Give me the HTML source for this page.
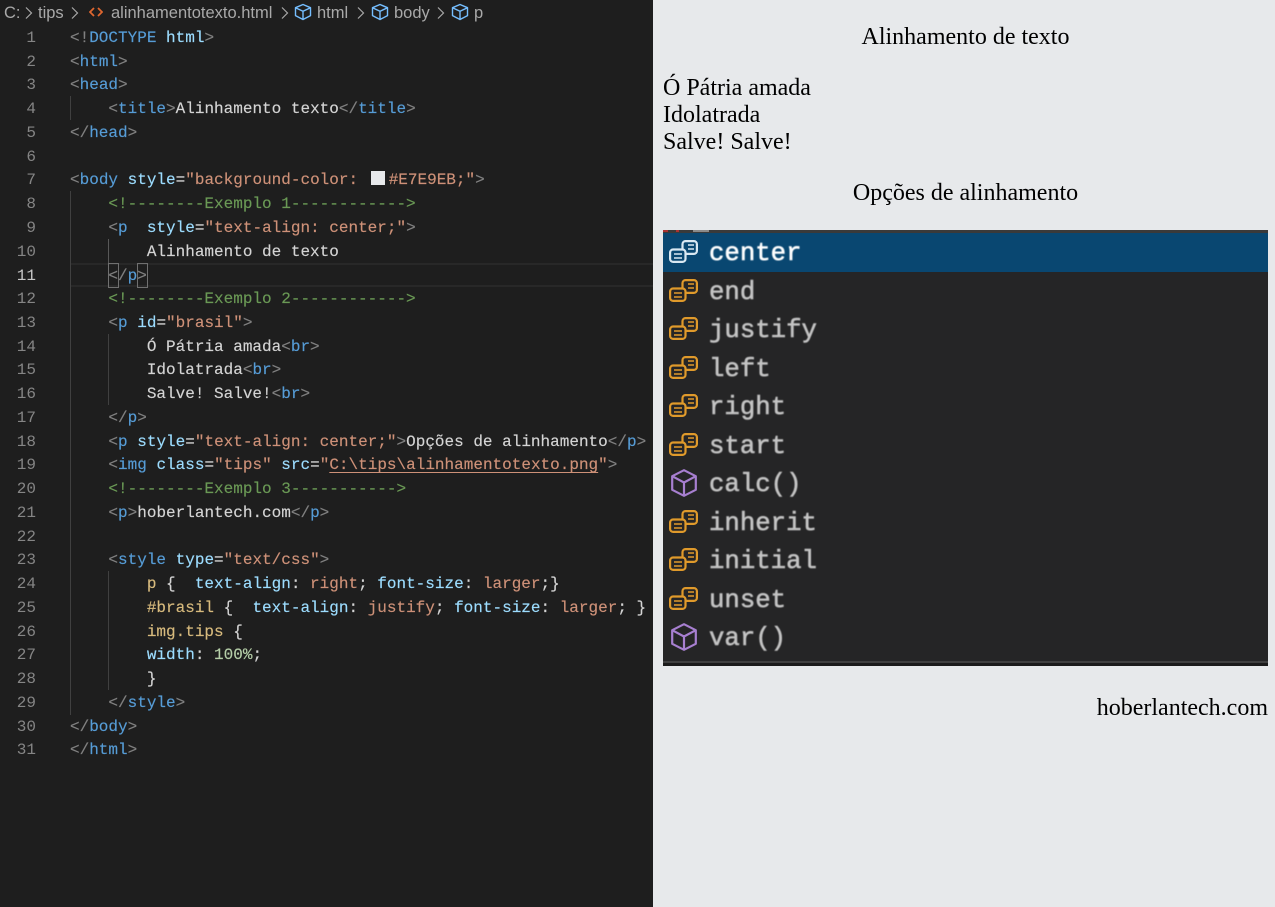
<!DOCTYPE html>
<html lang="pt">
<head>
<meta charset="utf-8">
<title>Alinhamento texto</title>
<style>
html,body{margin:0;padding:0;width:1275px;height:907px;overflow:hidden;background:#e7e9eb}
#ed{position:absolute;left:0;top:0;width:653px;height:907px;background:#1e1e1e;overflow:hidden;font-family:"Liberation Mono",monospace;font-size:16px;color:#d4d4d4}
.l{position:absolute;left:70px;height:24px;line-height:24px;white-space:pre;margin-top:1px;-webkit-text-stroke:.15px currentColor}
.n{position:absolute;left:0;width:36px;height:24px;line-height:24px;text-align:right;color:#858585;margin-top:1px}
.b{color:#808080}.t{color:#569cd6}.a{color:#9cdcfe}.s{color:#ce9178}.c{color:#6a9955}.y{color:#d7ba7d}.d{color:#b5cea8}.w{color:#d4d4d4}
.g{position:absolute;width:1px;background:#404040}
.cr{position:absolute;top:1px;height:24px;line-height:24px;font-family:"Liberation Sans",sans-serif;font-size:16.5px;color:#a9a9a9;white-space:pre}
.ch{position:absolute;top:7px}
.cb{position:absolute;top:3px}
#pg{position:absolute;left:653px;top:0;width:622px;height:907px;background:#e7e9eb;font-family:"Liberation Serif",serif;font-size:24px;color:#000}
#pg div{position:absolute;white-space:pre;line-height:28px;height:28px;margin-top:1px}
#im{position:absolute;left:663px;top:230px;width:605px;height:436px;background:#252526;overflow:hidden}
.r{position:absolute;left:46px;height:38px;line-height:38px;margin-top:1px;font-family:"Liberation Mono",monospace;font-size:25.7px;color:#c4c4c4;filter:blur(.45px);-webkit-text-stroke:.55px currentColor;white-space:pre}
.i{position:absolute}
</style>
</head>
<body>
<div id="ed">
<svg width="0" height="0" style="position:absolute">
<defs>
<symbol id="chv" viewBox="0 0 8 12"><path d="M1 .5 L6.5 6 L1 11.5" fill="none" stroke="#a9a9a9" stroke-width="1.2"/></symbol>
<symbol id="cube" viewBox="0 0 18 18"><path d="M9 1.5 L16.5 4.7 V12.6 L9 16.5 L1.5 12.6 V4.7 Z M1.5 4.7 L9 8.3 L16.5 4.7 M9 8.3 V16.5" fill="none" stroke="#75beff" stroke-width="1.4" stroke-linejoin="round"/></symbol>
<symbol id="enumO" viewBox="0 0 29 23"><g fill="none" stroke="#e09a2b" stroke-width="2.2"><rect x="13.5" y="1.1" width="14.4" height="12.8" rx="3"/><rect x="1.1" y="9.5" width="15.4" height="12.4" rx="3" fill="#252526"/><path d="M19 5 H25 M19 9 H25 M5 14 H13 M5 18 H13" stroke-width="1.5"/></g></symbol>
<symbol id="enumW" viewBox="0 0 29 23"><g fill="none" stroke="#d9e8f2" stroke-width="2.2"><rect x="13.5" y="1.1" width="14.4" height="12.8" rx="3"/><rect x="1.1" y="9.5" width="15.4" height="12.4" rx="3" fill="#094771"/><path d="M19 5 H25 M19 9 H25 M5 14 H13 M5 18 H13" stroke-width="1.5"/></g></symbol>
<symbol id="cubeP" viewBox="0 0 26 28"><path d="M13 1.2 L24.8 7.2 V20.8 L13 26.8 L1.2 20.8 V7.2 Z M1.2 7.2 L13 13.5 L24.8 7.2 M13 13.5 V26.8" fill="none" stroke="#a77fd0" stroke-width="2.2" stroke-linejoin="round"/></symbol>
</defs>
</svg>

<span class="cr" style="left:4px">C:</span>
<svg class="ch" style="left:25px" width="8" height="12"><use href="#chv"/></svg>
<span class="cr" style="left:38px">tips</span>
<svg class="ch" style="left:71px" width="8" height="12"><use href="#chv"/></svg>
<svg class="ch" style="left:89px;top:6px" width="14" height="12" viewBox="0 0 14 12"><path d="M5 2 L1 6 L5 10 M9 2 L13 6 L9 10" fill="none" stroke="#e0672f" stroke-width="1.8"/></svg>
<span class="cr" style="left:111px">alinhamentotexto.html</span>
<svg class="ch" style="left:281px" width="8" height="12"><use href="#chv"/></svg>
<svg class="cb" style="left:294px" width="18" height="18"><use href="#cube"/></svg>
<span class="cr" style="left:317px">html</span>
<svg class="ch" style="left:357px" width="8" height="12"><use href="#chv"/></svg>
<svg class="cb" style="left:371px" width="18" height="18"><use href="#cube"/></svg>
<span class="cr" style="left:394px">body</span>
<svg class="ch" style="left:437px" width="8" height="12"><use href="#chv"/></svg>
<svg class="cb" style="left:451px" width="18" height="18"><use href="#cube"/></svg>
<span class="cr" style="left:474px">p</span>

<div style="position:absolute;left:70px;top:263px;width:583px;height:20px;border-top:2px solid #282828;border-bottom:2px solid #282828"></div>
<div style="position:absolute;left:108px;top:263px;width:9px;height:23px;border:1px solid #707070"></div>
<div style="position:absolute;left:137px;top:263px;width:9px;height:23px;border:1px solid #707070"></div>

<div class="g" style="left:70px;top:96px;height:24px"></div>
<div class="g" style="left:70px;top:191px;height:524px"></div>
<div class="g" style="left:108px;top:239px;height:24px;background:#585858"></div>
<div class="g" style="left:108px;top:334px;height:71px"></div>
<div class="g" style="left:108px;top:571px;height:119px"></div>

<div class="n" style="top:25px">1</div><div class="l" style="top:25px"><span class="b">&lt;!</span><span class="t">DOCTYPE</span> <span class="a">html</span><span class="b">&gt;</span></div>
<div class="n" style="top:49px">2</div><div class="l" style="top:49px"><span class="b">&lt;</span><span class="t">html</span><span class="b">&gt;</span></div>
<div class="n" style="top:72px">3</div><div class="l" style="top:72px"><span class="b">&lt;</span><span class="t">head</span><span class="b">&gt;</span></div>
<div class="n" style="top:96px">4</div><div class="l" style="top:96px">    <span class="b">&lt;</span><span class="t">title</span><span class="b">&gt;</span>Alinhamento texto<span class="b">&lt;/</span><span class="t">title</span><span class="b">&gt;</span></div>
<div class="n" style="top:120px">5</div><div class="l" style="top:120px"><span class="b">&lt;/</span><span class="t">head</span><span class="b">&gt;</span></div>
<div class="n" style="top:144px">6</div>
<div class="n" style="top:167px">7</div><div class="l" style="top:167px"><span class="b">&lt;</span><span class="t">body</span> <span class="a">style</span>=<span class="s">"background-color: </span><span style="display:inline-block;width:14px;height:14px;background:#e7e9eb;vertical-align:-1px;margin-left:3px;margin-right:4px"></span><span class="s">#E7E9EB;"</span><span class="b">&gt;</span></div>
<div class="n" style="top:191px">8</div><div class="l c" style="top:191px">    &lt;!--------Exemplo 1------------&gt;</div>
<div class="n" style="top:215px">9</div><div class="l" style="top:215px">    <span class="b">&lt;</span><span class="t">p</span>  <span class="a">style</span>=<span class="s">"text-align: center;"</span><span class="b">&gt;</span></div>
<div class="n" style="top:239px">10</div><div class="l" style="top:239px">        Alinhamento de texto</div>
<div class="n" style="top:263px;color:#c6c6c6">11</div><div class="l" style="top:263px">    <span class="b">&lt;/</span><span class="t">p</span><span class="b">&gt;</span></div>
<div class="n" style="top:286px">12</div><div class="l c" style="top:286px">    &lt;!--------Exemplo 2------------&gt;</div>
<div class="n" style="top:310px">13</div><div class="l" style="top:310px">    <span class="b">&lt;</span><span class="t">p</span> <span class="a">id</span>=<span class="s">"brasil"</span><span class="b">&gt;</span></div>
<div class="n" style="top:334px">14</div><div class="l" style="top:334px">        Ó Pátria amada<span class="b">&lt;</span><span class="t">br</span><span class="b">&gt;</span></div>
<div class="n" style="top:357px">15</div><div class="l" style="top:357px">        Idolatrada<span class="b">&lt;</span><span class="t">br</span><span class="b">&gt;</span></div>
<div class="n" style="top:381px">16</div><div class="l" style="top:381px">        Salve! Salve!<span class="b">&lt;</span><span class="t">br</span><span class="b">&gt;</span></div>
<div class="n" style="top:405px">17</div><div class="l" style="top:405px">    <span class="b">&lt;/</span><span class="t">p</span><span class="b">&gt;</span></div>
<div class="n" style="top:429px">18</div><div class="l" style="top:429px">    <span class="b">&lt;</span><span class="t">p</span> <span class="a">style</span>=<span class="s">"text-align: center;"</span><span class="b">&gt;</span>Opções de alinhamento<span class="b">&lt;/</span><span class="t">p</span><span class="b">&gt;</span></div>
<div class="n" style="top:452px">19</div><div class="l" style="top:452px">    <span class="b">&lt;</span><span class="t">img</span> <span class="a">class</span>=<span class="s">"tips"</span> <span class="a">src</span>=<span class="s">"<span style="text-decoration:underline;text-underline-offset:3px">C:\tips\alinhamentotexto.png</span>"</span><span class="b">&gt;</span></div>
<div class="n" style="top:476px">20</div><div class="l c" style="top:476px">    &lt;!--------Exemplo 3-----------&gt;</div>
<div class="n" style="top:500px">21</div><div class="l" style="top:500px">    <span class="b">&lt;</span><span class="t">p</span><span class="b">&gt;</span>hoberlantech.com<span class="b">&lt;/</span><span class="t">p</span><span class="b">&gt;</span></div>
<div class="n" style="top:524px">22</div>
<div class="n" style="top:547px">23</div><div class="l" style="top:547px">    <span class="b">&lt;</span><span class="t">style</span> <span class="a">type</span>=<span class="s">"text/css"</span><span class="b">&gt;</span></div>
<div class="n" style="top:571px">24</div><div class="l" style="top:571px">        <span class="y">p</span> {  <span class="a">text-align</span>: <span class="s">right</span>; <span class="a">font-size</span>: <span class="s">larger</span>;}</div>
<div class="n" style="top:595px">25</div><div class="l" style="top:595px">        <span class="y">#brasil</span> {  <span class="a">text-align</span>: <span class="s">justify</span>; <span class="a">font-size</span>: <span class="s">larger</span>; }</div>
<div class="n" style="top:619px">26</div><div class="l" style="top:619px">        <span class="y">img.tips</span> {</div>
<div class="n" style="top:642px">27</div><div class="l" style="top:642px">        <span class="a">width</span>: <span class="d">100%</span>;</div>
<div class="n" style="top:666px">28</div><div class="l" style="top:666px">        }</div>
<div class="n" style="top:690px">29</div><div class="l" style="top:690px">    <span class="b">&lt;/</span><span class="t">style</span><span class="b">&gt;</span></div>
<div class="n" style="top:714px">30</div><div class="l" style="top:714px"><span class="b">&lt;/</span><span class="t">body</span><span class="b">&gt;</span></div>
<div class="n" style="top:737px">31</div><div class="l" style="top:737px"><span class="b">&lt;/</span><span class="t">html</span><span class="b">&gt;</span></div>
</div>

<div id="pg">
<div style="left:10px;width:605px;top:22px;text-align:center">Alinhamento de texto</div>
<div style="left:10px;top:73px">Ó Pátria amada</div>
<div style="left:10px;top:100px">Idolatrada</div>
<div style="left:10px;top:127px">Salve! Salve!</div>
<div style="left:10px;width:605px;top:178px;text-align:center">Opções de alinhamento</div>
<div style="left:10px;width:605px;top:693px;text-align:right">hoberlantech.com</div>
</div>

<div id="im">
<div style="position:absolute;left:0;top:0;width:605px;height:3px;background:#3a3a3a"></div>
<div style="position:absolute;left:0;top:0;width:5px;height:2px;background:#a33"></div>
<div style="position:absolute;left:13px;top:0;width:3px;height:2px;background:#a33"></div>
<div style="position:absolute;left:30px;top:0;width:16px;height:2px;background:#8a8a8a"></div>
<div style="position:absolute;left:0;top:3px;width:605px;height:39px;background:#094771"></div>
<div style="position:absolute;left:0;top:431px;width:605px;height:2px;background:#404040"></div>
<div style="position:absolute;left:0;top:433px;width:605px;height:3px;background:#1b1b1b"></div>

<svg class="i" style="left:6px;top:10px" width="29" height="23"><use href="#enumW"/></svg><div class="r" style="top:4px;color:#fff">center</div>
<svg class="i" style="left:6px;top:49px" width="29" height="23"><use href="#enumO"/></svg><div class="r" style="top:43px">end</div>
<svg class="i" style="left:6px;top:87px" width="29" height="23"><use href="#enumO"/></svg><div class="r" style="top:81px">justify</div>
<svg class="i" style="left:6px;top:126px" width="29" height="23"><use href="#enumO"/></svg><div class="r" style="top:120px">left</div>
<svg class="i" style="left:6px;top:164px" width="29" height="23"><use href="#enumO"/></svg><div class="r" style="top:158px">right</div>
<svg class="i" style="left:6px;top:203px" width="29" height="23"><use href="#enumO"/></svg><div class="r" style="top:197px">start</div>
<svg class="i" style="left:8px;top:239px" width="26" height="28"><use href="#cubeP"/></svg><div class="r" style="top:235px">calc()</div>
<svg class="i" style="left:6px;top:280px" width="29" height="23"><use href="#enumO"/></svg><div class="r" style="top:274px">inherit</div>
<svg class="i" style="left:6px;top:318px" width="29" height="23"><use href="#enumO"/></svg><div class="r" style="top:312px">initial</div>
<svg class="i" style="left:6px;top:357px" width="29" height="23"><use href="#enumO"/></svg><div class="r" style="top:351px">unset</div>
<svg class="i" style="left:8px;top:393px" width="26" height="28"><use href="#cubeP"/></svg><div class="r" style="top:389px">var()</div>
</div>
</body>
</html>
